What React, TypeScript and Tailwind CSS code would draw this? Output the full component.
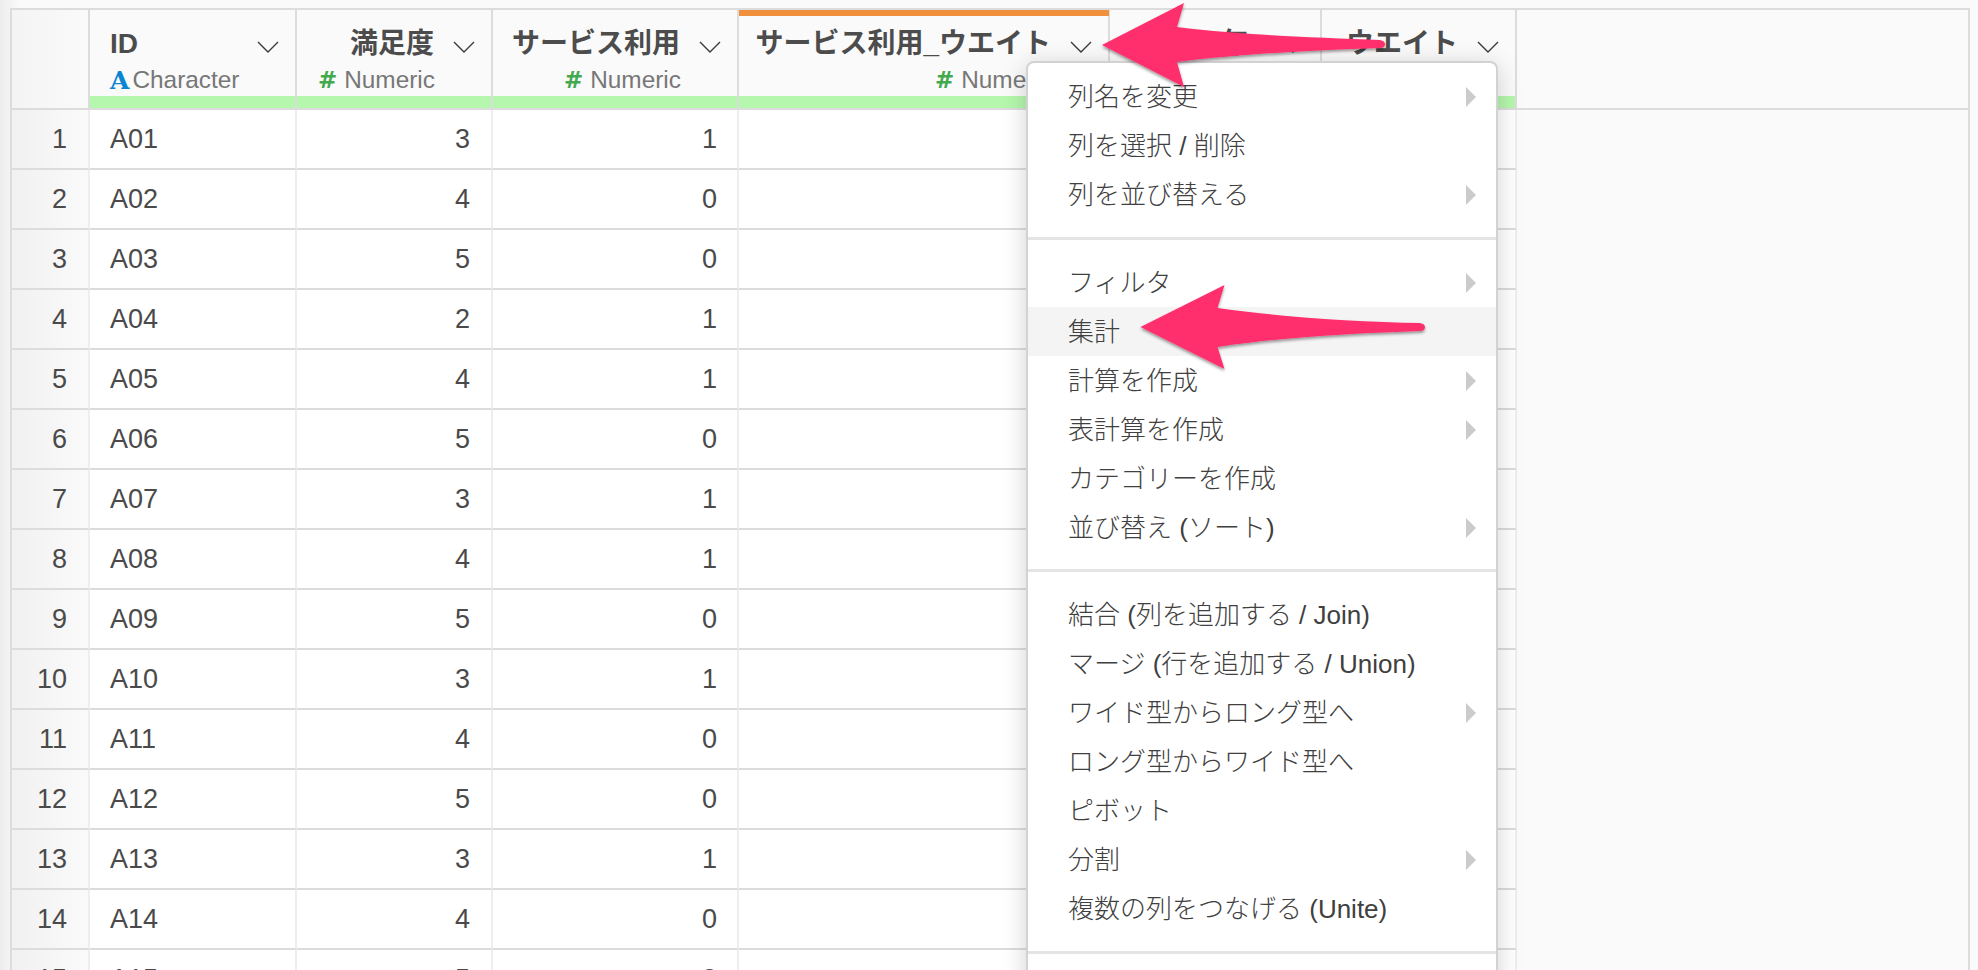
const rows: [string, number, number][] = [
  ["A01", 3, 1], ["A02", 4, 0], ["A03", 5, 0], ["A04", 2, 1], ["A05", 4, 1],
  ["A06", 5, 0], ["A07", 3, 1], ["A08", 4, 1], ["A09", 5, 0], ["A10", 3, 1],
  ["A11", 4, 0], ["A12", 5, 0], ["A13", 3, 1], ["A14", 4, 0], ["A15", 5, 0],
];

const FONT = "[font-family:'Liberation_Sans','Noto_Sans_CJK_JP',sans-serif]";

function Chevron() {
  return (
    <svg width="22" height="12" viewBox="0 0 22 12" className="absolute right-[16px] top-[31px]" fill="none" stroke="#3a3a3a" strokeWidth="1.4">
      <path d="M1 1 L11 11 L21 1" />
    </svg>
  );
}

function Caret() {
  return (
    <svg width="10" height="20" viewBox="0 0 10 20" className="absolute left-[438px] top-[15px]">
      <path d="M0 0 L10 10 L0 20 Z" fill="#cbcbcb" />
    </svg>
  );
}

function NumericType() {
  return (
    <div className="flex items-center justify-end h-[26px] pr-[56px] text-[24.4px] text-[#777]">
      <span className="[font-family:'DejaVu_Sans',sans-serif] font-bold text-[#43a94f] text-[23px] mr-[7px] leading-none">#</span>
      <span>Numeric</span>
    </div>
  );
}

function HeaderCell({ w, name, orange, pad = "pr-[57px]" }: { w: string; name: string; orange?: boolean; pad?: string }) {
  return (
    <div className={`relative ${w} shrink-0 h-[98px] border-r-2 border-[#dcdcdc] bg-[#fafafa]`}>
      {orange && <div className="absolute left-0 -right-px top-0 h-[6px] bg-[#f0903c]" />}
      <div className={`h-[57px] pt-[14px] ${pad} text-right text-[28px] leading-[40px] font-bold text-[#4c4c4c] whitespace-nowrap`}>{name}</div>
      <Chevron />
      <NumericType />
      <div className="absolute left-0 right-0 bottom-0 h-[12px] bg-[#b5f7ad]" />
    </div>
  );
}

function Row({ n, id, a, b }: { n: number; id: string; a: number; b: number }) {
  return (
    <div className="flex h-[60px] text-[27px] text-[#4a4a4a] leading-[59px]">
      <div className="w-[78px] shrink-0 h-full border-r-2 border-b-2 border-r-[#eeeeee] border-b-[#dcdcdc] bg-gradient-to-r from-[#f1f1f1] to-[#fafafa] text-right pr-[21px]">{n}</div>
      <div className="w-[207px] shrink-0 h-full border-r-2 border-b-2 border-r-[#eeeeee] border-b-[#dcdcdc] bg-white pl-[20px]">{id}</div>
      <div className="w-[196px] shrink-0 h-full border-r-2 border-b-2 border-r-[#eeeeee] border-b-[#dcdcdc] bg-white text-right pr-[21px]">{a}</div>
      <div className="w-[246px] shrink-0 h-full border-r-2 border-b-2 border-r-[#eeeeee] border-b-[#dcdcdc] bg-white text-right pr-[20px]">{b}</div>
      <div className="w-[371px] shrink-0 h-full border-r-2 border-b-2 border-r-[#eeeeee] border-b-[#dcdcdc] bg-white" />
      <div className="w-[212px] shrink-0 h-full border-r-2 border-b-2 border-r-[#eeeeee] border-b-[#dcdcdc] bg-white" />
      <div className="w-[195px] shrink-0 h-full border-r-2 border-b-2 border-r-[#eeeeee] border-b-[#dcdcdc] bg-white" />
    </div>
  );
}

function Item({ label, sub, active }: { label: string; sub?: boolean; active?: boolean }) {
  return (
    <div className={`relative h-[49px] pl-[40px] text-[26px] leading-[50px] text-[#404040] font-light whitespace-nowrap ${active ? "bg-[#f4f4f4]" : ""}`}>
      {label}
      {sub && <Caret />}
    </div>
  );
}

function Sep() {
  return <div className="h-[3px] bg-[#e4e4e4]" />;
}

function Arrows() {
  return (
    <svg width="1978" height="970" viewBox="0 0 1978 970" className="absolute left-0 top-0 pointer-events-none">
      <defs>
        <filter id="arrowShadow" x="-5%" y="-10%" width="110%" height="130%">
          <feDropShadow dx="0" dy="2" stdDeviation="1.5" floodColor="#000" floodOpacity="0.4" />
        </filter>
      </defs>
      <g fill="#ff2f6d" filter="url(#arrowShadow)">
        <path d="M1102 45 L1184 3 L1177 27 C1240 35 1320 38 1380 40 Q1385 41 1385 44 Q1385 48 1380 48 C1320 50 1240 54 1177 62 L1184 87 Z" />
        <path d="M1140.5 327 L1224.5 285 L1217.5 308 C1280 317 1360 322 1420 323 Q1425 324 1425 327 Q1425 331 1420 331 C1360 333 1280 337 1217.5 347 L1224.5 369 Z" />
      </g>
    </svg>
  );
}

export default function App() {
  return (
    <div className={`relative w-full h-[970px] overflow-hidden bg-gradient-to-r from-[#ececec] via-[#fafafa] via-[1%] to-[#fafafa] pt-2 pl-[10px] pr-2 ${FONT}`}>
      <div className="h-[980px] border-2 border-b-0 border-[#dcdcdc] bg-[#fafafa]">
        <div className="flex h-[100px] border-b-2 border-[#dcdcdc]">
          <div className="w-[78px] shrink-0 h-[98px] border-r-2 border-[#dcdcdc] bg-gradient-to-r from-[#f4f4f4] to-[#fafafa]" />
          <div className="relative w-[207px] shrink-0 h-[98px] border-r-2 border-[#dcdcdc] bg-[#fafafa]">
            <div className="h-[57px] pt-[14px] pl-[20px] text-[28px] leading-[40px] font-bold text-[#4c4c4c]">ID</div>
            <Chevron />
            <div className="flex items-center h-[26px] pl-[20px] text-[24.4px] text-[#777]">
              <span className="[font-family:'DejaVu_Serif',serif] font-bold text-[#0a85d1] text-[25px] leading-none mr-[3px]">A</span>
              <span>Character</span>
            </div>
            <div className="absolute left-0 right-0 bottom-0 h-[12px] bg-[#b5f7ad]" />
          </div>
          <HeaderCell w="w-[196px]" name="満足度" />
          <HeaderCell w="w-[246px]" name="サービス利用" />
          <HeaderCell w="w-[371px]" name="サービス利用_ウエイト" orange />
          <HeaderCell w="w-[212px]" name="年" pad="pr-[71px]" />
          <HeaderCell w="w-[195px]" name="ウエイト" />
        </div>
        {rows.map(([id, a, b], i) => (
          <Row key={id} n={i + 1} id={id} a={a} b={b} />
        ))}
      </div>

      <div className="absolute left-[1026px] top-[61px] w-[472px] h-[1000px] bg-white border-2 border-[#d2d2d2] rounded-[8px] shadow-[0_4px_24px_rgba(0,0,0,0.18)] pt-[9px]">
        <Item label="列名を変更" sub />
        <Item label="列を選択 / 削除" />
        <Item label="列を並び替える" sub />
        <div className="h-[18px]" />
        <Sep />
        <div className="h-[18px]" />
        <Item label="フィルタ" sub />
        <Item label="集計" active />
        <Item label="計算を作成" sub />
        <Item label="表計算を作成" sub />
        <Item label="カテゴリーを作成" />
        <Item label="並び替え (ソート)" sub />
        <div className="h-[17px]" />
        <Sep />
        <div className="h-[18px]" />
        <Item label="結合 (列を追加する / Join)" />
        <Item label="マージ (行を追加する / Union)" />
        <Item label="ワイド型からロング型へ" sub />
        <Item label="ロング型からワイド型へ" />
        <Item label="ピボット" />
        <Item label="分割" sub />
        <Item label="複数の列をつなげる (Unite)" />
        <div className="h-[18px]" />
        <Sep />
      </div>

      <Arrows />
    </div>
  );
}
